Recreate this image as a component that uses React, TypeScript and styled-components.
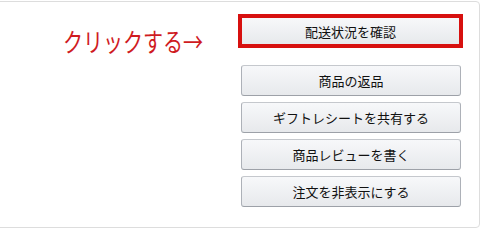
import React from 'react';
import styled, { createGlobalStyle } from 'styled-components';

const GlobalStyle = createGlobalStyle`
  html, body {
    margin: 0;
    padding: 0;
    background: #ffffff;
  }
  body {
    font-family: "Noto Sans CJK JP", "Liberation Sans", sans-serif;
    overflow: hidden;
  }
`;

const Panel = styled.div`
  box-sizing: border-box;
  width: 490px;
  height: 227px;
  margin: 1px 0 0 -10px;
  border: 1px solid #dddddd;
  border-radius: 4px;
  padding: 12px 18px 0 0;
  display: grid;
  grid-template-columns: 1fr 220px;
  align-items: start;
`;

const Hint = styled.div`
  justify-self: end;
  margin: 18px 38px 0 0;
  color: #cf1b1f;
  font-size: 20px;
  line-height: 20px;
  white-space: nowrap;
  transform: scaleY(1.3);
  transform-origin: center;
`;

const Actions = styled.div`
  display: flex;
  flex-direction: column;
  gap: 6px;
`;

const Highlight = styled.div`
  box-sizing: border-box;
  height: 34px;
  margin: 0 -2px 11px -3px;
  border: 4px solid #d7100f;
  display: flex;
`;

const ActionButton = styled.button<{ $framed?: boolean }>`
  box-sizing: border-box;
  width: 100%;
  height: ${(p) => (p.$framed ? '100%' : '31px')};
  padding: 0;
  border: ${(p) => (p.$framed ? 'none' : '1px solid #adb1b8')};
  border-top-color: ${(p) => (p.$framed ? 'transparent' : '#c5c8cd')};
  border-bottom-color: ${(p) => (p.$framed ? 'transparent' : '#9da1a8')};
  border-radius: ${(p) => (p.$framed ? '0' : '3px')};
  background: linear-gradient(to bottom, #f7f8fa, #e7e9ec);
  color: #111111;
  font-family: "Noto Sans CJK JP", "Liberation Sans", sans-serif;
  font-size: 13px;
  line-height: 1;
  text-align: center;
  cursor: pointer;
`;

const items = ['商品の返品', 'ギフトレシートを共有する', '商品レビューを書く', '注文を非表示にする'];

export default function App() {
  return (
    <>
      <GlobalStyle />
      <Panel>
        <Hint>クリックする→</Hint>
        <Actions>
          <Highlight>
            <ActionButton $framed>配送状況を確認</ActionButton>
          </Highlight>
          {items.map((label) => (
            <ActionButton key={label}>{label}</ActionButton>
          ))}
        </Actions>
      </Panel>
    </>
  );
}
